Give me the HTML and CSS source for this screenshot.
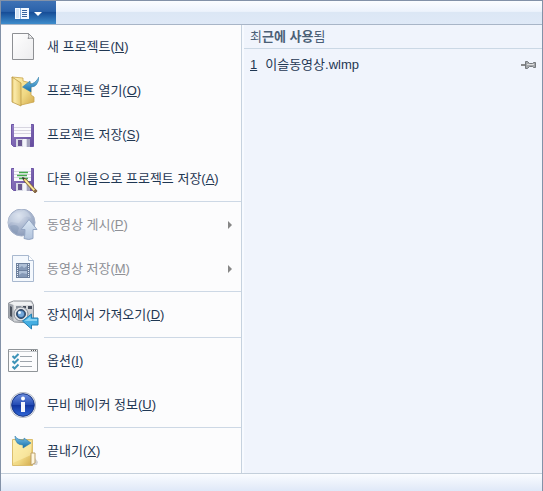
FILE: index.html
```html
<!DOCTYPE html>
<html lang="ko">
<head>
<meta charset="utf-8">
<title>무비 메이커</title>
<link rel="stylesheet" href="styles.css">
</head>
<body>
<div class="window">
  <header class="bar">
    <button class="app-button" type="button" aria-label="메뉴">
      <svg width="44" height="20" viewBox="0 0 44 20" aria-hidden="true">
        <rect x="9" y="5" width="14" height="11" fill="#f4f9ff"/>
        <path d="M14.5 5v11" stroke="#8bb2de"/>
        <path d="M10 6h3v9h-3z" fill="#d4e5f6"/>
        <path d="M16 7.500h5M16 9.500h5M16 11.500h5M16 13.500h5" stroke="#39659f"/>
        <path d="M28 9h8l-4 4z" fill="#fff"/>
      </svg>
    </button>
  </header>
  <div class="content">
    <nav class="menu">
      <div class="group">
        <button class="item" type="button">
          <svg class="icon" viewBox="0 0 32 32" aria-hidden="true">
            <defs><linearGradient id="paper" x2="1" y2="1"><stop stop-color="#fff"/><stop offset="1" stop-color="#ececee"/></linearGradient></defs>
            <path d="M5.500 2.500h16l5 5v21h-21z" fill="url(#paper)" stroke="#8e9094"/>
            <path d="M21.500 2.500q1 3-.5 5 3-1 5.500 0z" fill="#fff" stroke="#8e9094"/>
          </svg>
          <span>새 프로젝트(<u>N</u>)</span>
        </button>
        <button class="item" type="button">
          <svg class="icon" viewBox="0 0 32 32" aria-hidden="true">
            <defs>
              <linearGradient id="gold" x2="1" y2="1"><stop stop-color="#fff0b0"/><stop offset=".6" stop-color="#f0d883"/><stop offset="1" stop-color="#d2a94c"/></linearGradient>
              <linearGradient id="flap" x2="1" y2="0"><stop stop-color="#e3c66e"/><stop offset=".3" stop-color="#fbeaa9"/><stop offset="1" stop-color="#e4c86f"/></linearGradient>
              <linearGradient id="blue" x2="0" y2="1"><stop stop-color="#83c8ec"/><stop offset="1" stop-color="#126da9"/></linearGradient>
            </defs>
            <path d="M5 2l11 1v3l8 2v12l3 2v5l-13 3z" fill="url(#gold)" stroke="#c9a44d" stroke-width=".8"/>
            <path d="M5 2l9 6v23l-9-4z" fill="url(#flap)" stroke="#bd9b48" stroke-width=".8"/>
            <path d="M32 2q-1 10-8 10v5l-8.500-5L23 6v3q5 0 9-7z" fill="url(#blue)" stroke="#337ea9" stroke-width=".6"/>
          </svg>
          <span>프로젝트 열기(<u>O</u>)</span>
        </button>
        <button class="item" type="button">
          <svg class="icon" viewBox="0 0 32 32" aria-hidden="true">
            <defs>
              <linearGradient id="violet" x2="1" y2="1"><stop stop-color="#9480c6"/><stop offset="1" stop-color="#644b9d"/></linearGradient>
              <g id="disk">
                <path d="M4.500 5.500h22v22h-20l-2-2z" fill="url(#violet)" stroke="#6d55a6"/>
                <path d="M7 5h17v13H7z" fill="#fafafd"/>
                <path d="M7 8.500h17M7 11.500h17M7 14.500h17" stroke="#d7d5e0"/>
                <path d="M9 20h14v8H9z" fill="#d8dae5"/>
                <path d="M11 21h4v6h-4z" fill="#6a5890"/>
                <path d="M16 20h3v8h-3z" fill="#f3f4fa"/>
                <path d="M20 20h3v8h-3z" fill="#a5a4bd"/>
              </g>
            </defs>
            <use href="#disk"/>
          </svg>
          <span>프로젝트 저장(<u>S</u>)</span>
        </button>
        <button class="item" type="button">
          <svg class="icon" viewBox="0 0 32 32" aria-hidden="true">
            <use href="#disk"/>
            <path d="M12 9.500h9M10 12.500h10M12 15.500h9" stroke="#45ad4b" stroke-width="1.500"/>
            <path d="M16 15l3 1 11 12-2 2-11-12z" fill="#efd178" stroke="#695236" stroke-width=".8"/>
            <path d="M18.500 17.500l10 11" stroke="#fff4b2"/>
            <path d="M15 14l3 1-2 2z" fill="#303133"/>
            <path d="M28.500 26l2 2-2 2-2-2z" fill="#866546"/>
          </svg>
          <span>다른 이름으로 프로젝트 저장(<u>A</u>)</span>
        </button>
      </div>
      <div class="group">
        <button class="item" type="button" disabled>
          <svg class="icon" viewBox="0 0 32 32" aria-hidden="true">
            <defs>
              <radialGradient id="globe" cx=".4" cy=".25" r=".8"><stop stop-color="#dde4f0"/><stop offset=".5" stop-color="#aebbd2"/><stop offset="1" stop-color="#8797b6"/></radialGradient>
              <linearGradient id="pale" x2="0" y2="1"><stop stop-color="#dce9f6"/><stop offset="1" stop-color="#b1c2db"/></linearGradient>
            </defs>
            <circle cx="14.500" cy="13.500" r="13.500" fill="url(#globe)" stroke="#a3b0c8"/>
            <path d="M6 4q8 0 11-3 6 3 7 8-5-3-8 0l-4 5-8-1-3 3q-1-8 5-12z" fill="#d9e2ef" opacity=".35"/>
            <path d="M3 17q7-3 9 2l-2 6Q4 23 3 17z" fill="#768bad" opacity=".35"/>
            <path d="M22 10.500l8 10h-4v9q-4 2-9 0 1-3 1-9h-4z" fill="url(#pale)" stroke="#93a5c3"/>
          </svg>
          <span>동영상 게시(<u>P</u>)</span>
          <svg class="arrow" width="4" height="8" viewBox="0 0 4 8" aria-hidden="true"><path d="M0 0l4 4-4 4z" fill="#868686"/></svg>
        </button>
        <button class="item" type="button" disabled>
          <svg class="icon" viewBox="0 0 32 32" aria-hidden="true">
            <path d="M5.500 2.500h16l5 5v21h-21z" fill="#f4f8fd" stroke="#a8b8cf"/>
            <path d="M21.500 2.500v5h5" fill="#fff" stroke="#a8b8cf"/>
            <path d="M9 10h14v15H9z" fill="#6e819e"/>
            <path d="M12 11h8v6h-8zM12 18h8v6h-8z" fill="#aebfd6"/>
            <path d="M12 15l3-2 2 2 3-2v4h-8zM12 22l3-2 5 1v3h-8z" fill="#8498b6"/>
            <path d="M10.500 11v14M21.500 11v14" stroke="#e8eff8" stroke-dasharray="1 1"/>
          </svg>
          <span>동영상 저장(<u>M</u>)</span>
          <svg class="arrow" width="4" height="8" viewBox="0 0 4 8" aria-hidden="true"><path d="M0 0l4 4-4 4z" fill="#868686"/></svg>
        </button>
      </div>
      <div class="group">
        <button class="item" type="button">
          <svg class="icon" viewBox="0 0 32 32" aria-hidden="true">
            <defs><linearGradient id="silver" x2="1" y2="1"><stop stop-color="#f7f7f7"/><stop offset="1" stop-color="#b4b8bf"/></linearGradient></defs>
            <path d="M1.500 4l5-2h18l2 4v14l-2 4-17-1-6-4z" fill="url(#silver)" stroke="#8d9198"/>
            <path d="M1.500 4l5 2v16l-5-4z" fill="#a0a5ad"/>
            <path d="M3 7l2 1v10l-2-1z" fill="#4b515c"/>
            <path d="M5 3h18l3 3H7z" fill="#f0f1f3"/>
            <path d="M9 7h5v2H9z" fill="#8b929d"/>
            <path d="M16 7h3v2h-3zM21 7h4v3h-4z" fill="#444c5a"/>
            <circle cx="14" cy="15" r="7" fill="#e1e3e7" stroke="#858b95"/>
            <circle cx="14" cy="15" r="4.500" fill="#315d8f" stroke="#3a4b63"/>
            <circle cx="14" cy="15" r="3" fill="#76a9da"/>
            <circle cx="12.500" cy="13.500" r="1.500" fill="#e8f6ff"/>
            <path d="M15.500 22l9-7v4h6.500v7h-6.500v4z" fill="#45aee2" stroke="#2380b4"/>
            <path d="M17.500 22l6-4.500V20H30v2z" fill="#8bd3f1"/>
          </svg>
          <span>장치에서 가져오기(<u>D</u>)</span>
        </button>
      </div>
      <div class="group">
        <button class="item" type="button">
          <svg class="icon" viewBox="0 0 32 32" aria-hidden="true">
            <path d="M1.500 4.500h29v22h-29z" fill="#fcfcfd" stroke="#8f9498"/>
            <path d="M2 6.500h28" stroke="#c5c9cd"/>
            <path d="M24 5.500h5" stroke="#555" stroke-dasharray="1 1"/>
            <path d="M13 11.500h12M13 16.500h12M13 21.500h12" stroke="#9da4ab"/>
            <path d="M5.500 11l2 2 4-4M5.500 16l2 2 4-4M5.500 21.500l2 2 4-4" fill="none" stroke="#3d94b8" stroke-width="2"/>
          </svg>
          <span>옵션(<u>I</u>)</span>
        </button>
        <button class="item" type="button">
          <svg class="icon" viewBox="0 0 32 32" aria-hidden="true">
            <defs><linearGradient id="info" x2="0" y2="1"><stop stop-color="#6d8fe0"/><stop offset=".48" stop-color="#244cb5"/><stop offset=".52" stop-color="#1035a0"/><stop offset="1" stop-color="#3168d8"/></linearGradient></defs>
            <circle cx="16" cy="16" r="13" fill="#a9afb9"/>
            <circle cx="16" cy="16" r="12.300" fill="#e1e7f1"/>
            <circle cx="16" cy="16" r="11.300" fill="url(#info)" stroke="#183584"/>
            <circle cx="16" cy="9.500" r="2" fill="#fff"/>
            <rect x="14" y="13" width="4" height="10" fill="#f2f5fc"/>
          </svg>
          <span>무비 메이커 정보(<u>U</u>)</span>
        </button>
      </div>
      <div class="group">
        <button class="item" type="button">
          <svg class="icon" viewBox="0 0 32 32" aria-hidden="true">
            <path d="M25 30h5l1-3-3-4z" fill="#aaa" opacity=".5"/>
            <path d="M5.500 4.500h20v26h-20z" fill="url(#gold)" stroke="#dbbe6e"/>
            <path d="M6 6h18v14L6 28z" fill="#fff2b5" opacity=".55"/>
            <path d="M24 30V18h4v10z" fill="#fff7df" stroke="#bda16a"/>
            <path d="M8 1q2 4 9 4V3l7 5-8 5v-3Q8 10 8 1z" fill="url(#blue)" stroke="#337ea9" stroke-width=".6"/>
          </svg>
          <span>끝내기(<u>X</u>)</span>
        </button>
      </div>
    </nav>
    <section class="recent">
      <h2 class="title">최<b>근에 사용</b>됨</h2>
      <div class="recent-row">
        <a class="file" href="#"><u>1</u><span>이슬동영상.wlmp</span></a>
        <button class="pin" type="button" aria-label="고정">
          <svg width="16" height="10" viewBox="0 0 16 10" aria-hidden="true">
            <path d="M0 5h4" stroke="#666" stroke-width="1.500"/>
            <path d="M4.500 1.500h2l2 2h3l1-1h2v5h-2l-1-1h-3l-2 2h-2z" fill="#a4a7ab" stroke="#75797d"/>
            <path d="M6 4.500h7" stroke="#ddd"/>
          </svg>
        </button>
      </div>
    </section>
  </div>
  <footer class="footer"></footer>
</div>
</body>
</html>
```
FILE: styles.css
```css
*,
*::before {
  box-sizing: border-box;
}

body {
  margin: 0;
  font: 13px/16px "Liberation Sans", "Noto Sans CJK KR", sans-serif;
  color: #1f3753;
}

button {
  margin: 0;
  padding: 0;
  border: 0;
  background: none;
  color: inherit;
  font: inherit;
}

.window {
  display: flex;
  flex-direction: column;
  min-height: 100vh;
  border: 1px solid #8392a8;
  background: #f0f4fc;
}

.bar {
  display: flex;
  height: 24px;
  border-bottom: 1px solid #a8b5c7;
  background: linear-gradient(#fbfdff, #edf3fc 45%, #dce7f5 50%, #dfe9f7);
}

.app-button {
  width: 55px;
  padding-left: 5px;
  background: linear-gradient(#3e72b5, #2b62aa 45%, #174e98 50%, #3e8dcc);
}

.app-button svg {
  display: block;
}

.content {
  display: flex;
  flex: 1;
}

.menu {
  flex: 0 0 241px;
  border-right: 1px solid #c6d2df;
  background: #fcfcfd;
}

.group + .group::before {
  display: block;
  height: 2px;
  margin-left: 43px;
  border-top: 1px solid #cdd8e5;
  content: "";
}

.item {
  display: flex;
  align-items: center;
  gap: 8px;
  width: 100%;
  height: 44px;
  padding: 0 9px 0 6px;
  text-align: left;
  white-space: nowrap;
}

.item:disabled {
  color: #8e9096;
}

.icon {
  flex: none;
  width: 32px;
  height: 32px;
}

.arrow {
  margin-left: auto;
}

.recent {
  flex: 1;
  min-width: 0;
  border-left: 2px solid #f7faff;
}

.title {
  margin: 0;
  padding: 4px 6px 3px;
  border-bottom: 1px solid #cbd8e5;
  color: #4b5f76;
  font-size: 13px;
  font-weight: 400;
  line-height: 16px;
}

.recent-row {
  display: flex;
  align-items: center;
  justify-content: space-between;
  padding: 8px 5px 8px 6px;
}

.file {
  display: flex;
  gap: 8px;
  color: inherit;
  text-decoration: none;
}

.pin svg {
  display: block;
}

.footer {
  height: 18px;
  border-top: 1px solid #c4cfdb;
  background: linear-gradient(#fafcff, #dfe8f8);
}
```
